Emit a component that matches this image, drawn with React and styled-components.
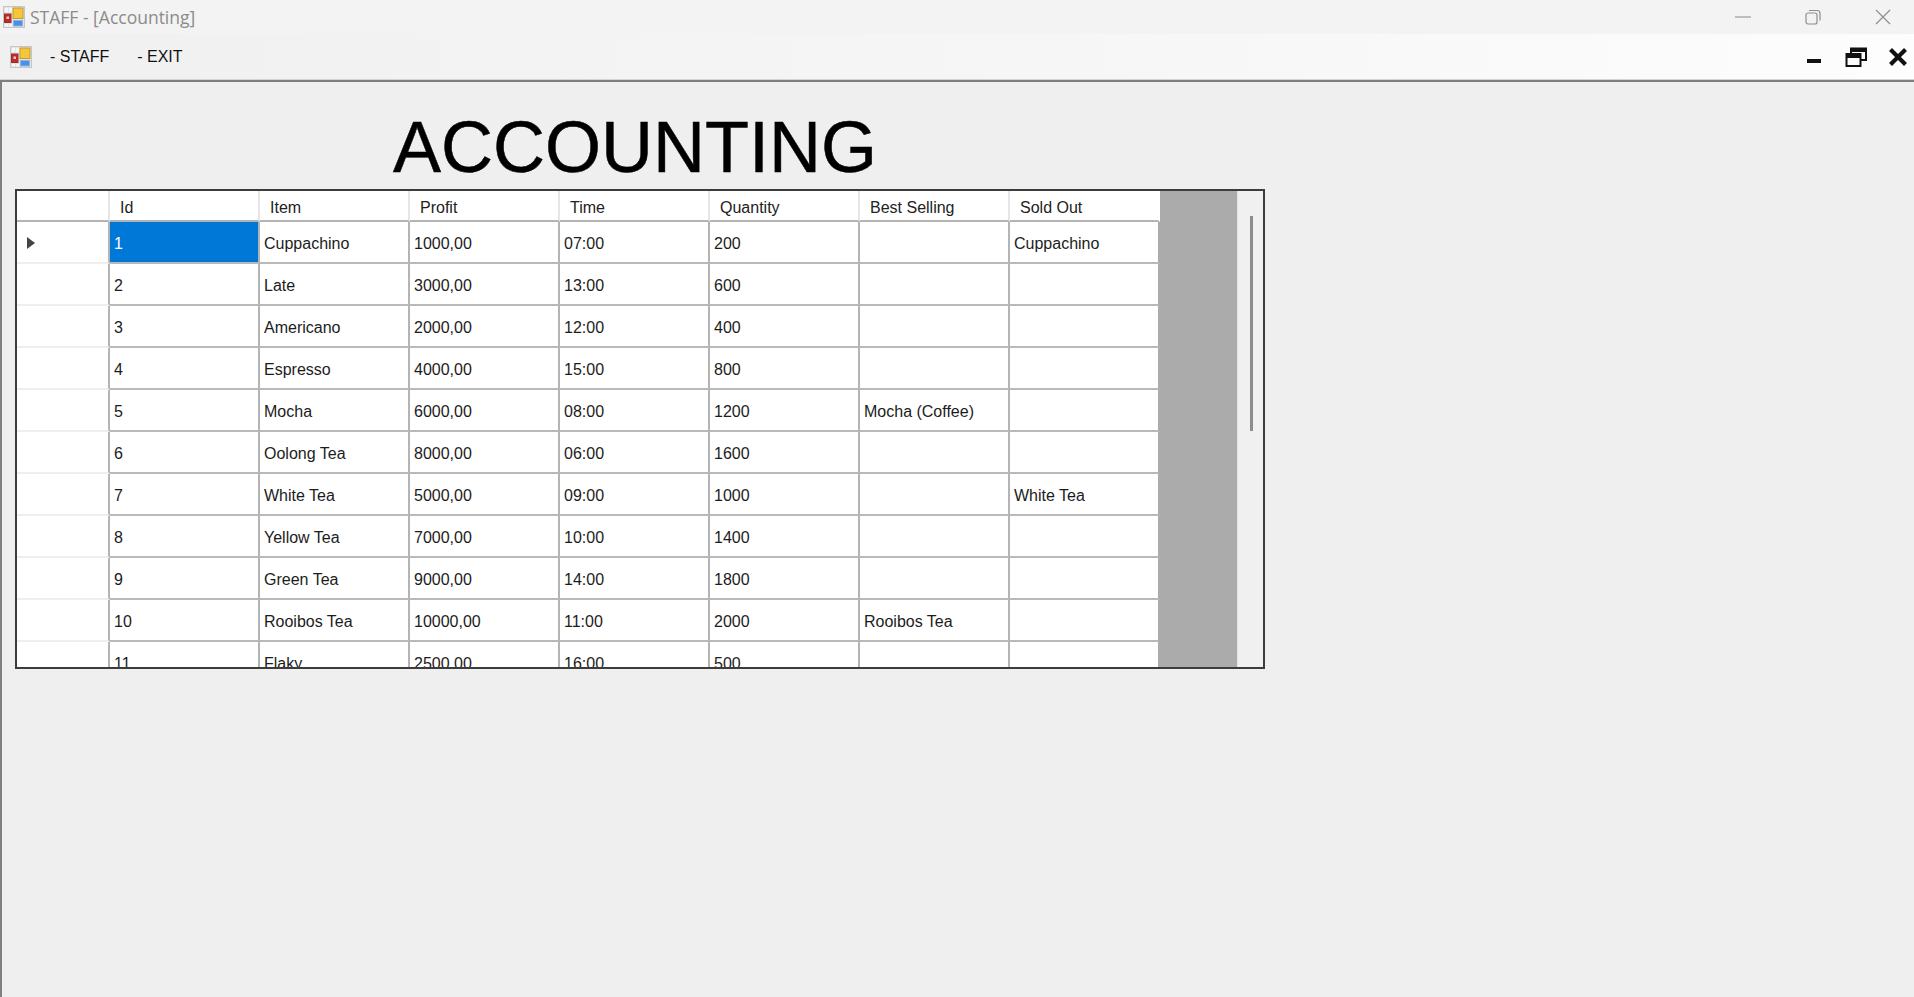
import React from "react"
import styled, { createGlobalStyle } from "styled-components"

const GlobalStyle = createGlobalStyle`
html,body{margin:0;padding:0;height:100%;overflow:hidden;}
body{background:#efefef;font-family:"Liberation Sans",Arial,sans-serif;}
`

const Window = styled.div`
width:1914px;
height:997px;
display:flex;
flex-direction:column;
overflow:hidden;
`

const TitleBar = styled.div`
height:34px;
background:#f3f3f3;
display:flex;
align-items:center;
padding-left:3px;
flex-shrink:0;
`

const WindowTitle = styled.span`
font-family:"Open Sans","Noto Sans",sans-serif;
font-size:17.5px;
color:#8b8b8b;
margin-left:5px;
flex:1;
`

const CaptionGroup = styled.div`
display:flex;
margin-right:-4px;
`

const CaptionButton = styled.div`
width:70px;
height:34px;
display:flex;
align-items:center;
justify-content:center;
`

const MenuBar = styled.div`
height:46px;
flex-shrink:0;
display:flex;
align-items:center;
padding-left:10px;
background:linear-gradient(to right,#f0f0f0 0%,#f4f4f4 37%,#f7f7f7 62%,#fdfdfd 100%);
box-shadow:inset 0 -1px 0 #d4d4d4;
`

const MenuItem = styled.span`
font-size:16px;
color:#111;
margin-left:${p=>p.$gap}px;
`

const MenuControls = styled.div`
margin-left:auto;
display:flex;
align-items:center;
padding-right:6px;
`

const MenuControl = styled.div`
display:flex;
margin-left:${p=>p.$gap||0}px;
`

const Workspace = styled.div`
flex:1;
background:#efefef;
border-top:2px solid #7f7f7f;
border-left:2px solid #7f7f7f;
padding:0 0 0 13px;
`

const Heading = styled.h1`
margin:0;
box-sizing:border-box;
padding:25px 0 0 378px;
height:107px;
font-weight:400;
font-size:72px;
line-height:81px;
color:#000;
-webkit-text-stroke:0.5px #000;
`

const GridFrame = styled.div`
width:1250px;
height:480px;
box-sizing:border-box;
border:2px solid #3c3c3c;
background:#ababab;
display:flex;
overflow:hidden;
`

const GridBody = styled.div`
flex:1;
overflow:hidden;
`

const Table = styled.table`
border-collapse:separate;
border-spacing:0;
table-layout:fixed;
width:1143px;
background:#fff;
`

const HeadCell = styled.th`
height:31px;
padding:4px 0 0 10px;
box-sizing:border-box;
text-align:left;
font-weight:400;
font-size:16px;
color:#222;
background:#fff;
border-bottom:2px solid #b4b4b4;
border-right:2px solid #e6e6e6;
&:last-child{border-right-color:#fff;}
`

const RowHeader = styled.td`
height:42px;
padding:2px 0 0 9px;
box-sizing:border-box;
background:#fff;
border-bottom:2px solid #eeeeee;
border-right:2px solid #b4b4b4;
`

const Cell = styled.td`
height:42px;
padding:3px 0 0 4px;
box-sizing:border-box;
font-size:16px;
color:${p=>p.$selected?"#fff":"#1c1c1c"};
background:${p=>p.$selected?"#0078d7":"#fff"};
border-bottom:2px solid #b9b9b9;
border-right:2px solid #b4b4b4;
white-space:nowrap;
overflow:hidden;
&:last-child{border-right-color:#ababab;}
`

const Scrollbar = styled.div`
width:26px;
flex-shrink:0;
background:#f0f0f0;
border-left:1px solid #e4e4e4;
box-sizing:border-box;
padding:25px 0 0 12px;
`

const ScrollThumb = styled.div`
width:3px;
height:215px;
background:#8c8c8c;
`

const AppIcon = ({ size = 22 }) => (
  <svg width={size} height={size} viewBox="0 0 22 22">
    <rect x="0.5" y="0.5" width="21" height="21" fill="#e4e4e4" stroke="#c6c6c6" />
    <rect x="2" y="2" width="3" height="4" fill="#f6f6f6" />
    <rect x="6" y="2" width="3" height="4" fill="#f6f6f6" />
    <rect x="10" y="2" width="10" height="10.5" fill="#f5c63c" stroke="#c49a2a" />
    <rect x="1.5" y="8" width="6.5" height="8.5" fill="#c22a2a" stroke="#96302c" />
    <rect x="3.5" y="10.5" width="2.5" height="2.5" fill="#f0c8c8" />
    <rect x="10.5" y="14.5" width="9" height="5.5" fill="#4a8fe8" stroke="#8ab4e6" />
    <rect x="2" y="18" width="3" height="2.5" fill="#f6f6f6" />
    <rect x="6" y="18" width="3" height="2.5" fill="#f6f6f6" />
  </svg>
)

const columns = ["Id", "Item", "Profit", "Time", "Quantity", "Best Selling", "Sold Out"]

const rows = [
  ["1", "Cuppachino", "1000,00", "07:00", "200", "", "Cuppachino"],
  ["2", "Late", "3000,00", "13:00", "600", "", ""],
  ["3", "Americano", "2000,00", "12:00", "400", "", ""],
  ["4", "Espresso", "4000,00", "15:00", "800", "", ""],
  ["5", "Mocha", "6000,00", "08:00", "1200", "Mocha (Coffee)", ""],
  ["6", "Oolong Tea", "8000,00", "06:00", "1600", "", ""],
  ["7", "White Tea", "5000,00", "09:00", "1000", "", "White Tea"],
  ["8", "Yellow Tea", "7000,00", "10:00", "1400", "", ""],
  ["9", "Green Tea", "9000,00", "14:00", "1800", "", ""],
  ["10", "Rooibos Tea", "10000,00", "11:00", "2000", "Rooibos Tea", ""],
  ["11", "Flaky", "2500,00", "16:00", "500", "", ""],
]

export default function App() {
  return (
    <>
      <GlobalStyle />
      <Window>
        <TitleBar>
          <AppIcon />
          <WindowTitle>STAFF - [Accounting]</WindowTitle>
          <CaptionGroup>
            <CaptionButton>
              <svg width="16" height="2" viewBox="0 0 16 2"><path d="M0 1h16" stroke="#9a9a9a" strokeWidth="1.2" /></svg>
            </CaptionButton>
            <CaptionButton>
              <svg width="16" height="16" viewBox="0 0 16 16" fill="none" stroke="#8e8e8e" strokeWidth="1.2">
                <rect x="1" y="4" width="11" height="11" rx="2" />
                <path d="M4 1.5h8a3 3 0 0 1 3 3v7" />
              </svg>
            </CaptionButton>
            <CaptionButton>
              <svg width="16" height="16" viewBox="0 0 16 16" stroke="#8e8e8e" strokeWidth="1.2"><path d="M1 1l14 14M15 1L1 15" /></svg>
            </CaptionButton>
          </CaptionGroup>
        </TitleBar>
        <MenuBar>
          <AppIcon />
          <MenuItem $gap={18}>- STAFF</MenuItem>
          <MenuItem $gap={28}>- EXIT</MenuItem>
          <MenuControls>
            <MenuControl>
              <svg width="16" height="16" viewBox="0 0 16 16"><rect x="1" y="10" width="14" height="4" fill="#111" /></svg>
            </MenuControl>
            <MenuControl $gap={23}>
              <svg width="22" height="22" viewBox="0 0 22 22" fill="none" stroke="#111" strokeWidth="2">
                <rect x="1.5" y="8" width="14" height="12" />
                <path d="M1.5 10.5h14" strokeWidth="3" />
                <path d="M6 8V2.5h15V14h-5" />
                <path d="M6 4.5h15" strokeWidth="3" />
              </svg>
            </MenuControl>
            <MenuControl $gap={21}>
              <svg width="20" height="20" viewBox="0 0 20 20" stroke="#111" strokeWidth="4.2"><path d="M2.5 2.5l15 15M17.5 2.5l-15 15" /></svg>
            </MenuControl>
          </MenuControls>
        </MenuBar>
        <Workspace>
          <Heading>ACCOUNTING</Heading>
          <GridFrame>
            <GridBody>
              <Table>
                <colgroup>
                  <col width="93" />
                  {columns.map(c => <col key={c} width="150" />)}
                </colgroup>
                <thead>
                  <tr>
                    <HeadCell />
                    {columns.map(c => <HeadCell key={c}>{c}</HeadCell>)}
                  </tr>
                </thead>
                <tbody>
                  {rows.map((r, i) => (
                    <tr key={r[0]}>
                      <RowHeader>
                        {i === 0 && (
                          <svg width="10" height="14" viewBox="0 0 10 14" style={{ display: "block" }}>
                            <path d="M1 1l8 6-8 6z" fill="#444" />
                          </svg>
                        )}
                      </RowHeader>
                      {r.map((v, j) => <Cell key={j} $selected={i === 0 && j === 0}>{v}</Cell>)}
                    </tr>
                  ))}
                </tbody>
              </Table>
            </GridBody>
            <Scrollbar><ScrollThumb /></Scrollbar>
          </GridFrame>
        </Workspace>
      </Window>
    </>
  )
}
